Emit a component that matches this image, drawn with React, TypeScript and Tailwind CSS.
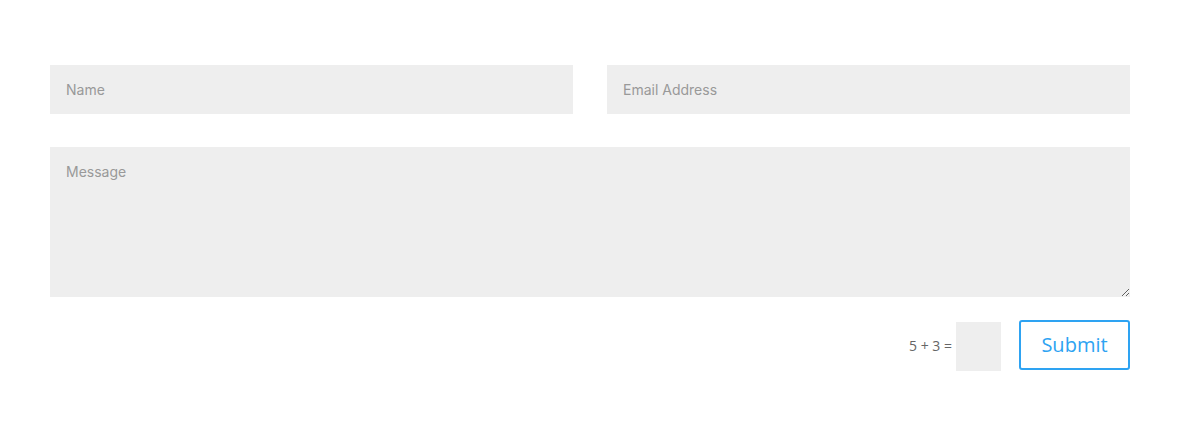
export default function App() {
  return (
    <div className="min-h-screen bg-white px-[50px] pt-[65px] pr-[55px]">
      <form className="flex flex-col" onSubmit={(e) => e.preventDefault()}>
        <div className="grid grid-cols-2 gap-[34px]">
          <input
            type="text"
            placeholder="Name"
            className="h-[49px] bg-[#eeeeee] px-4 text-[14px] text-[#999] placeholder:text-[#999] outline-none font-['Inter',sans-serif]"
          />
          <input
            type="text"
            placeholder="Email Address"
            className="h-[49px] bg-[#eeeeee] px-4 text-[14px] text-[#999] placeholder:text-[#999] outline-none font-['Inter',sans-serif]"
          />
        </div>
        <textarea
          placeholder="Message"
          className="mt-[33px] h-[150px] bg-[#eeeeee] px-4 pt-[16px] text-[14px] leading-[18px] text-[#999] placeholder:text-[#999] outline-none font-['Inter',sans-serif]"
        />
        <div className="mt-[23px] flex items-start justify-end">
          <span className="mt-[16px] mr-1 text-[14px] leading-[19px] text-[#666] font-['Open_Sans',sans-serif]">5 + 3 =</span>
          <input
            type="text"
            className="mt-[2px] h-[49px] w-[45px] bg-[#eeeeee] outline-none"
          />
          <button
            type="submit"
            className="ml-[18px] h-[50px] w-[111px] rounded-[3px] border-2 border-[#2ea3f2] text-[20px] text-[#2ea3f2] font-['Open_Sans',sans-serif]"
          >
            Submit
          </button>
        </div>
      </form>
    </div>
  );
}
